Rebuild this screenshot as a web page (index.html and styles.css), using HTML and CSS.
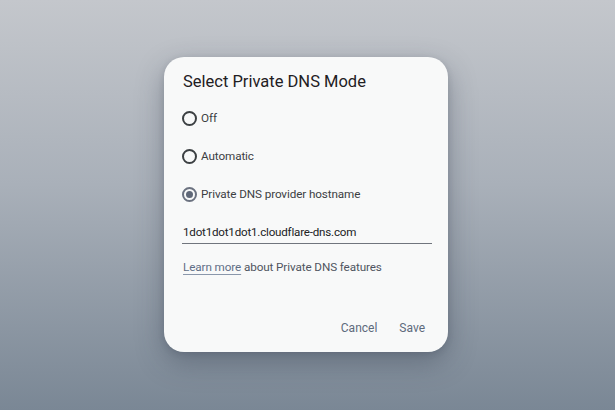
FILE: index.html
```html
<!DOCTYPE html>
<html>
<head>
<meta charset="utf-8">
<link rel="stylesheet" href="styles.css">
</head>
<body>
<div class="dialog">
  <div class="title">Select Private DNS Mode</div>
  <div class="options">
    <div class="option"><span class="radio"></span><span class="label">Off</span></div>
    <div class="option"><span class="radio"></span><span class="label">Automatic</span></div>
    <div class="option"><span class="radio checked"></span><span class="label">Private DNS provider hostname</span></div>
  </div>
  <div class="field">1dot1dot1dot1.cloudflare-dns.com</div>
  <div class="learn"><span class="link">Learn more</span> about Private DNS features</div>
  <div class="actions">
    <span class="btn">Cancel</span>
    <span class="btn">Save</span>
  </div>
</div>
</body>
</html>
```
FILE: styles.css
```css
html, body {
  margin: 0;
  padding: 0;
}
body {
  width: 615px;
  height: 410px;
  background: linear-gradient(to bottom, #c4c7cc 0%, #a9b0b9 45%, #7a8795 100%);
  font-family: Roboto, "Noto Sans", "Liberation Sans", sans-serif;
  display: flex;
  justify-content: center;
  align-items: flex-start;
  overflow: hidden;
}
.dialog {
  margin-top: 57px;
  margin-left: -3px;
  width: 284px;
  height: 295px;
  box-sizing: border-box;
  background: #f8f9f9;
  border-radius: 20px;
  box-shadow: 0 10px 28px rgba(40, 50, 65, 0.35), 0 2px 6px rgba(40, 50, 65, 0.15);
  padding: 13px 23px 0 18px;
  display: flex;
  flex-direction: column;
}
.title {
  font-size: 16.5px;
  line-height: 24px;
  color: #1f2023;
  margin-left: 1px;
}
.options {
  margin-top: 5px;
  display: flex;
  flex-direction: column;
}
.option {
  height: 38px;
  display: flex;
  align-items: center;
  gap: 4px;
}
.radio {
  width: 15px;
  height: 15px;
  box-sizing: border-box;
  border: 2px solid #3c4043;
  border-radius: 50%;
  display: flex;
  align-items: center;
  justify-content: center;
}
.radio.checked {
  border-color: #6b7280;
}
.radio.checked::after {
  content: "";
  width: 7px;
  height: 7px;
  border-radius: 50%;
  background: #5f6878;
}
.label {
  font-size: 11.7px;
  letter-spacing: -0.1px;
  color: #3c4043;
}
.field {
  margin-top: 9px;
  margin-right: -7px;
  font-size: 11.6px;
  letter-spacing: -0.2px;
  line-height: 20px;
  color: #202124;
  padding-bottom: 1px;
  border-bottom: 1px solid #70757d;
  padding-left: 1px;
}
.learn {
  margin-top: 13px;
  font-size: 11.7px;
  letter-spacing: -0.1px;
  line-height: 20px;
  color: #4f5560;
  padding-left: 1px;
}
.link {
  color: #5f6e86;
  text-decoration: underline;
  text-underline-offset: 3px;
  text-decoration-color: #8a97ab;
}
.actions {
  margin-top: 41px;
  display: flex;
  justify-content: flex-end;
  gap: 22px;
}
.btn {
  font-size: 12px;
  line-height: 20px;
  color: #5d6a7c;
}
```
